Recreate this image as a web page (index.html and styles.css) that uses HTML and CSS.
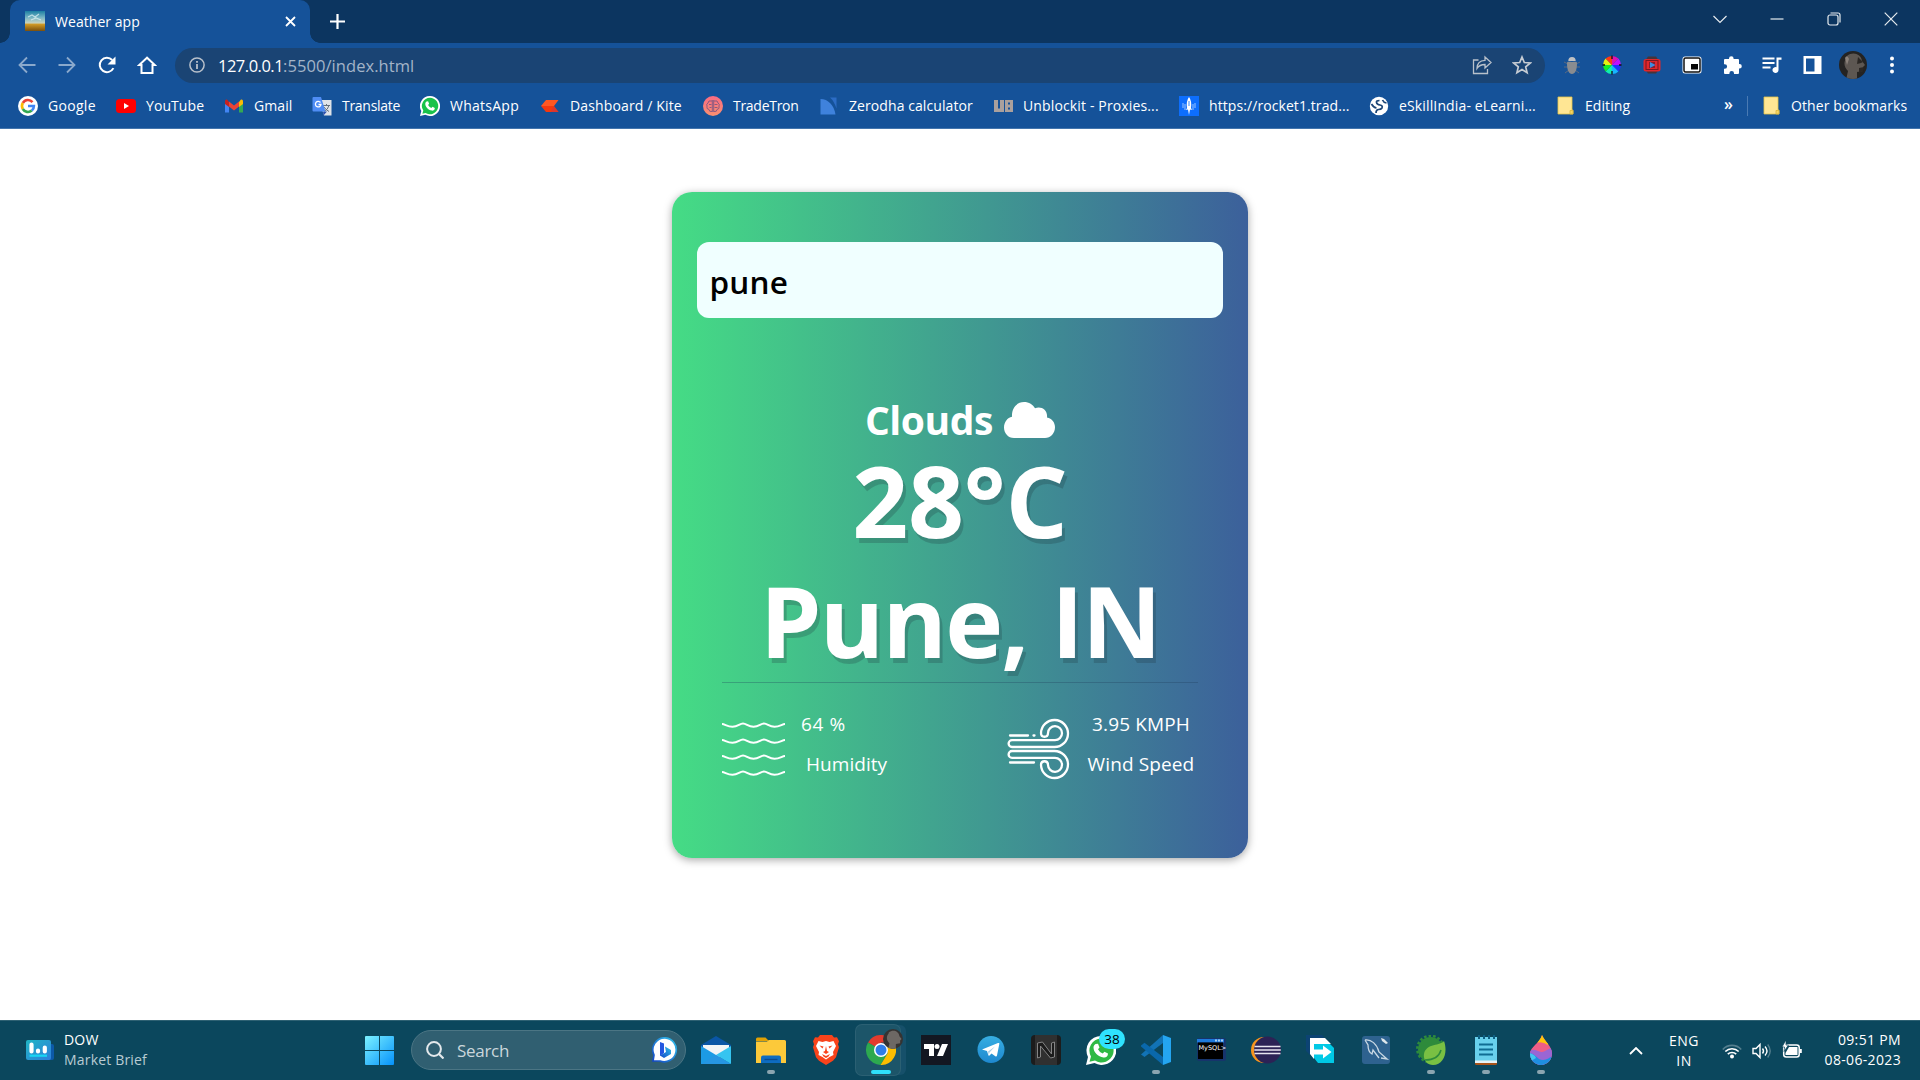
FILE: index.html
```
<!DOCTYPE html>
<html lang="en">
<head>
<meta charset="utf-8">
<title>Weather app</title>
<link rel="stylesheet" href="styles.css">
</head>
<body>
<div class="screen">
  <header class="browser">
    <div class="tabstrip">
      <div class="tab">
        <svg class="i20" viewBox="0 0 20 20"><defs><linearGradient id="fav" x1="0" y1="0" x2="0" y2="1"><stop offset="0" stop-color="#1b7fa3"/><stop offset=".35" stop-color="#7fb9c6"/><stop offset=".6" stop-color="#c7d2bd"/><stop offset=".66" stop-color="#d09a26"/><stop offset="1" stop-color="#7a4f0c"/></linearGradient></defs><rect width="20" height="20" fill="url(#fav)"/><path d="M3 6l4-2 3 2 4-3M6 9l5-2 5 2" stroke="#d7edf0" stroke-width="1.2" fill="none" opacity=".8"/></svg>
        <span class="tab-title">Weather app</span>
        <svg class="tab-close" viewBox="0 0 11 11"><path d="M1 1l9 9M10 1l-9 9" stroke="#fff" stroke-width="1.8"/></svg>
      </div>
      <svg class="new-tab" viewBox="0 0 15 15"><path d="M7.500 0v15M0 7.500h15" stroke="#fff" stroke-width="2.200"/></svg>
      <div class="window-controls">
        <svg viewBox="0 0 14 14"><path d="M.5 4l6.500 6.500L13.500 4"/></svg>
        <svg viewBox="0 0 14 14"><path d="M.5 7h13"/></svg>
        <svg viewBox="0 0 14 14"><rect x="1" y="3" width="10" height="10" rx="2"/><path d="M3.500 1H11a2 2 0 0 1 2 2v7.500"/></svg>
        <svg viewBox="0 0 14 14"><path d="M.7.7l12.600 12.600M13.300.7L.7 13.300"/></svg>
      </div>
    </div>

    <div class="toolbar">
      <div class="nav">
        <svg class="dim" viewBox="0 0 20 20"><path d="M18.500 10H3M10 2.500L2.500 10l7.500 7.500" fill="none" stroke="#fff" stroke-width="1.800"/></svg>
        <svg class="dim" viewBox="0 0 20 20"><path d="M1.500 10H17M10 2.500L17.500 10 10 17.500" fill="none" stroke="#fff" stroke-width="1.800"/></svg>
        <svg viewBox="0 0 20 20"><path d="M16.400 13.100A7.200 7.200 0 1 1 15.200 5" fill="none" stroke="#fff" stroke-width="2"/><path d="M18.500 1.500v8h-8z" fill="#fff"/></svg>
        <svg viewBox="0 0 20 20"><path d="M10 2.700L2.200 10h2.300v8h11v-8h2.300z" fill="none" stroke="#fff" stroke-width="2"/></svg>
      </div>
      <div class="omnibox">
        <svg class="info" viewBox="0 0 16 16"><circle cx="8" cy="8" r="7.100" fill="none" stroke="#b9c1cb" stroke-width="1.500"/><path d="M8 7v5M8 4v1.700" stroke="#b9c1cb" stroke-width="1.800"/></svg>
        <span class="url"><span class="host">127.0.0.1</span>:5500/index.html</span>
        <svg class="i20 share" viewBox="0 0 20 20"><path d="M6.500 5H1.500v13.500h14V14M5 13.500c0-5 3-8 8-8.200V2l6 5.500-6 5.500V9.500c-4 0-6.500 1.500-8 4z" fill="none" stroke="#b9c1cb" stroke-width="1.300"/></svg>
        <svg class="i20" viewBox="0 0 20 20"><path d="M10 2l2.300 5.500 6 .5-4.600 3.900 1.400 5.800L10 14.600l-5.100 3.100 1.400-5.800L1.700 8l6-.5z" fill="none" stroke="#c6ccd3" stroke-width="1.700"/></svg>
      </div>
      <div class="extensions">
        <svg viewBox="0 0 20 20"><path d="M2 7l4 2M18 7l-4 2M2 12h4m8 0h4M3 18l4-3m10 3l-4-3" stroke="#5c6b80"/><path d="M6.300 6a3.700 4 0 0 1 7.400 0z" fill="#bfc1c3"/><path d="M5 8.500C5 6 7 7 10 7s5-1 5 1.500C15 15 13 19 10 19S5 15 5 8.500z" fill="#898c90"/></svg>
        <svg viewBox="0 0 20 20"><path d="M10 10V1a9 9 0 0 1 6.400 2.600z" fill="#e010b0"/><path d="M10 10l6.400-6.400A9 9 0 0 1 19 10z" fill="#c010ff"/><path d="M10 10h9a9 9 0 0 1-2.600 6.400z" fill="#2130ff"/><path d="M10 10l6.400 6.400A9 9 0 0 1 10 19z" fill="#16b5ff"/><path d="M10 10v9a9 9 0 0 1-6.400-2.600z" fill="#10eeb0"/><path d="M10 10l-6.400 6.400A9 9 0 0 1 1 10z" fill="#18ee24"/><path d="M10 10H1a9 9 0 0 1 2.600-6.400z" fill="#e8ef10"/><path d="M10 10L3.600 3.600A9 9 0 0 1 10 1z" fill="#ff3912"/><path d="M10 .5v3.500M10 16v3.500M.5 10h2.500M17 10h2.500" stroke="#111" stroke-width="1.300"/></svg>
        <svg viewBox="0 0 20 20"><path d="M6 1.500h8l2 3H4zM6 18.500h8l2-3H4z" fill="#47343a"/><rect x="1.500" y="4" width="17" height="12.500" rx="2.500" fill="#e0272c"/><rect x="4" y="5.500" width="12" height="9" fill="none" stroke="#7b1720"/><rect x="7" y="7" width="6" height="6" fill="#8b1c2c"/><path d="M8 7l5.500 3-5.500 3z" fill="#3f8de0"/></svg>
        <svg viewBox="0 0 20 20"><rect x=".5" y="1.500" width="19" height="17" rx="2.500" fill="#fff"/><rect x="2" y="3" width="16" height="14" rx="1.500" fill="#fff" stroke="#111" stroke-width="1.500"/><rect x="9" y="9" width="7" height="5.500" fill="#050505"/></svg>
        <svg viewBox="0 0 20 20"><path d="M7 3.500a2.300 2.300 0 0 1 4.600 0V4H16a1 1 0 0 1 1 1v4h.5a2.300 2.300 0 0 1 0 4.600H17V18a1 1 0 0 1-1 1h-4v-.8a2.300 2.300 0 0 0-4.600 0v.8H3a1 1 0 0 1-1-1v-4.200h.8a2.300 2.300 0 0 0 0-4.600H2V5a1 1 0 0 1 1-1h4z" fill="#fff"/></svg>
        <svg viewBox="0 0 20 20"><path d="M.5 3.500h12M.5 8h12M.5 12.500h8" stroke="#fff" stroke-width="2"/><path d="M14.500 2.500h5v2.200h-3V15a3 3 0 1 1-2-2.800z" fill="#fff"/></svg>
        <svg viewBox="0 0 20 20"><path d="M1.500 1h18v18h-18zM4 3.500v13h8.500v-13z" fill="#fff" fill-rule="evenodd"/></svg>
      </div>
      <svg class="profile" viewBox="0 0 28 28"><defs><clipPath id="pc"><circle cx="14" cy="14" r="14"/></clipPath></defs><g clip-path="url(#pc)"><rect width="28" height="28" fill="#242322"/><path d="M8 5c6-5 14-2 15 5l3 4-2 2v4l-6 1v8H7l2-9c-4-4-5-9-1-14z" fill="#5d5752"/><path d="M19 6l5 5-2 1-4 1zM20 17l5-1-1 4-4 2z" fill="#2b2724"/><path d="M6 7q2-4 4 1l-2 6z" fill="#8a817a"/></g></svg>
      <svg class="menu" viewBox="0 0 6 18"><circle cx="3" cy="2.500" r="2"/><circle cx="3" cy="9" r="2"/><circle cx="3" cy="15.500" r="2"/></svg>
    </div>

    <nav class="bookmarks">
      <a class="bm"><svg class="i20" viewBox="0 0 20 20"><circle cx="10" cy="10" r="10" fill="#fff"/><g fill="none" stroke-width="2.600"><path d="M14.500 6.100A6 6 0 0 0 4.800 7" stroke="#ea4335"/><path d="M4.800 7a6 6 0 0 0 0 6" stroke="#fbbc05"/><path d="M4.800 13a6 6 0 0 0 9 1.600" stroke="#34a853"/><path d="M13.800 14.600A6 6 0 0 0 15.900 10H10" stroke="#4285f4"/></g></svg><span class="w48">Google</span></a>
      <a class="bm"><svg class="i20" viewBox="0 0 20 20"><rect y="3" width="20" height="14" rx="3.500" fill="#f00"/><path d="M8 7l5 3-5 3z" fill="#fff"/></svg><span class="w58">YouTube</span></a>
      <a class="bm"><svg class="i20" viewBox="0 0 20 20"><path d="M1 5v11.500h4V9z" fill="#4285f4"/><path d="M19 5v11.500h-4V9z" fill="#34a853"/><path d="M1 5.500V8l4 3V6L3.500 4C2 3 1 4 1 5.500z" fill="#c5221f"/><path d="M5 5.500l5 4 5-4v5l-5 4-5-4z" fill="#ea4335"/><path d="M19 5.500V8l-4 3V6l1.500-2C18 3 19 4 19 5.500z" fill="#fbbc04"/></svg><span class="w38">Gmail</span></a>
      <a class="bm"><svg class="i20" viewBox="0 0 20 20"><path d="M7 4h12.500v15.500H12z" fill="#dfe3e8"/><path d="M11 9.500h7M14.500 8v1.500M17 9.500q-1 4-5 6M12 11q2 3 5 4.500" stroke="#66727e" fill="none"/><path d="M11 15.500h4L11.500 19.500z" fill="#2a50ae"/><path d="M1.500 1H9l4.500 14.500h-12A1 1 0 0 1 .500 14.500V2a1 1 0 0 1 1-1z" fill="#4f8df5"/><path d="M8.500 6.500A2.800 2.800 0 1 0 9 8.500H6.500" fill="none" stroke="#fff" stroke-width="1.300"/></svg><span class="w58 t-tight">Translate</span></a>
      <a class="bm"><svg class="i20" viewBox="0 0 20 20"><path d="M10 0a10 10 0 1 1-4.700 18.800L0 20l1.300-5A10 10 0 0 1 10 0z" fill="#fff"/><path d="M10 1.800a8.200 8.200 0 1 1-4.400 15.100l-3.200.8.900-3.100A8.200 8.200 0 0 1 10 1.800z" fill="#19c24a"/><path d="M6.500 5.500l1.600-.2 1 2.500-1 1.200q1 2 3.200 3l1.200-1.200 2.300 1.200c0 2-1.500 2.800-3 2.600C8 14 5.300 10.500 5.300 8c0-1 .5-2 1.200-2.500z" fill="#fff"/></svg><span class="w70 t-wide">WhatsApp</span></a>
      <a class="bm"><svg class="i20" viewBox="0 0 20 20"><path d="M6 4h12.500l-4.500 6H1z" fill="#ff5722"/><path d="M1 10h13l4.500 6H6z" fill="#f4380f"/><path d="M13.500 10.500l5 5.500H11z" fill="#db362f"/></svg><span class="w113 t-mid">Dashboard / Kite</span></a>
      <a class="bm"><svg class="i20" viewBox="0 0 20 20"><defs><linearGradient id="tt" x1="0" y1="0" x2="0" y2="1"><stop stop-color="#fa6b83"/><stop offset="1" stop-color="#f99070"/></linearGradient></defs><circle cx="10" cy="10" r="10" fill="url(#tt)"/><path d="M9.300 4v12M10.700 4v12M9 5Q5 4 5 7q-2 1-1 3-1 3 2 3.500Q6 16 9 15.500M11 5q4-1 4 2 2 1 1 3 1 3-2 3.500 0 2.500-3 2M6 8.500h2.500m3 0h3m-8 3h2m3 0h3" fill="none" stroke="#8a5a80"/></svg><span class="w66 t-tight">TradeTron</span></a>
      <a class="bm"><svg class="i20" viewBox="0 0 20 20"><path d="M11 1.500h6.500v11Q15 5 11 1.500z" fill="#2c6cc5"/><path d="M1.500 3C9 3 15 9 16.500 18.500h-15z" fill="#3f82dc"/></svg><span class="w124">Zerodha calculator</span></a>
      <a class="bm"><svg class="i20" viewBox="0 0 20 20"><path d="M1 4h4v8.500h2V4h4v12H1zM12 4h8v12h-8zM15 6.500v2h2v-2zM15 11.500v2h2v-2z" fill="#aaa09d" fill-rule="evenodd"/></svg><span class="w136 t-mid">Unblockit - Proxies...</span></a>
      <a class="bm"><svg class="i20" viewBox="0 0 20 20"><rect width="20" height="20" fill="#0d6efd"/><path d="M10 1q3 4 2 11l1 2-2-.5L10 19l-1-5.500L7 14l1-2Q7 5 10 1z" fill="#fff"/><path d="M10 5v5" stroke="#3988f8"/><path d="M4 7v5M6 8v6M14 8v6M16 7v5" stroke="#9cc5ff"/></svg><span class="w140">https://rocket1.trad...</span></a>
      <a class="bm"><svg class="i20" viewBox="0 0 20 20"><circle cx="10" cy="10" r="9.200" fill="#fff"/><path d="M10.500 4.500q-3.500 0-3 2t3.500 2.500 2 3q-1 1.500-3.500 1.500T7 17M2.500 8q2 3.500 5 4M13.500 4q1 2.500 4 3" fill="none" stroke="#1b4475" stroke-width="1.700"/></svg><span class="w136 t-mid">eSkillIndia- eLearni...</span></a>
      <a class="bm"><svg class="i20 folder" viewBox="0 0 20 20"><path d="M3 1h14v13h1v4H3z" fill="#ffe694" stroke="#e5c44a" stroke-width=".8"/><path d="M15 18v-3.500h3V18z" fill="#f6d565" stroke="#dcb63a" stroke-width=".8"/></svg><span class="w46">Editing</span></a>
      <span class="more">»</span>
      <a class="bm other"><svg class="i20 folder" viewBox="0 0 20 20"><path d="M3 1h14v13h1v4H3z" fill="#ffe694" stroke="#e5c44a" stroke-width=".8"/><path d="M15 18v-3.500h3V18z" fill="#f6d565" stroke="#dcb63a" stroke-width=".8"/></svg><span class="w116">Other bookmarks</span></a>
    </nav>
  </header>

  <main class="page">
    <section class="card">
      <div class="city-input">pune</div>
      <div class="condition"><span>Clouds</span>
        <svg viewBox="0 0 51 36"><path d="M10 36C4 36 0 31 0 25.500 0 20 3.500 15.500 8 14.700 7.500 6 13 0 20 0c5 0 9 2.500 11 6.300C37 3.500 44 8 43 15.500c5 1 8 5 8 9.800C51 31.500 46.500 36 41 36z" fill="#fff"/></svg>
      </div>
      <div class="temp">28°C</div>
      <div class="place">Pune, IN</div>
      <div class="details">
        <div class="detail">
          <svg viewBox="0 0 63 62"><g fill="none" stroke="#fff" stroke-width="2"><path id="wv" d="M0 6c3 0 5 2.800 10.500 2.800S17.500 5.500 21 5.500s5 3.300 10.500 3.300S38.500 5.500 42 5.500s5 3.300 10.500 3.300S60 6 63 6"/><use href="#wv" y="16"/><use href="#wv" y="32"/><use href="#wv" y="48"/></g></svg>
          <div class="humidity"><span class="pct">64 %</span><span class="hlabel">Humidity</span></div>
        </div>
        <div class="detail">
          <svg viewBox="0 0 63 62"><g fill="none" stroke="#fff" stroke-width="2.300" stroke-linecap="round"><path d="M3 17.500h18M26.500 17.500h1M3 44.500h24"/><path d="M5 29h42.500a13.500 13.500 0 1 0-13.500-14c0 5 7 5 7 0a7 7 0 1 1 7 7.200H5a3.400 3.400 0 0 0 0 6.800z"/><path d="M5 33h42.500a13.500 13.500 0 1 1-13.500 14c0-5 7-5 7 0a7 7 0 1 0 7-7.200H5a3.400 3.400 0 0 1 0-6.800z"/></g></svg>
          <div class="wind"><span>3.95 KMPH</span><span>Wind Speed</span></div>
        </div>
      </div>
    </section>
  </main>

  <footer class="taskbar">
    <div class="widget">
      <svg viewBox="0 0 28 20"><defs><linearGradient id="wg" x1="0" y1="0" x2="1" y2="1"><stop stop-color="#20b5c4"/><stop offset="1" stop-color="#2d7fdc"/></linearGradient></defs><rect x="18" y="4" width="10" height="16" rx="2" fill="#0c59a8"/><rect width="25" height="20" rx="2" fill="url(#wg)"/><path d="M5.500 4.500v7M12 10.500v1M18.800 7.500v4" stroke="#fff" stroke-width="4.200" stroke-linecap="round"/><path d="M3.500 15.700H21" stroke="#18d6f4" stroke-width="2.200"/></svg>
      <div class="stack"><span class="bright">DOW</span><span>Market Brief</span></div>
    </div>
    <svg class="start" viewBox="0 0 29 29"><defs><linearGradient id="win" x1="0" y1="0" x2="1" y2="1"><stop stop-color="#7cf1ff"/><stop offset="1" stop-color="#0592fb"/></linearGradient></defs><path d="M1 0h13v14H0V1a1 1 0 0 1 1-1zM15 0h13a1 1 0 0 1 1 1v13H15zM0 15h14v14H1a1 1 0 0 1-1-1zM15 15h14v13a1 1 0 0 1-1 1H15z" fill="url(#win)"/></svg>
    <div class="search">
      <svg class="glass" viewBox="0 0 18 18"><circle cx="8" cy="8" r="6.900" fill="none" stroke="#e4e9ec" stroke-width="2"/><path d="M13 13l4.500 4.500" stroke="#e4e9ec" stroke-width="2.200"/></svg>
      <span>Search</span>
      <svg class="bing" viewBox="0 0 26 26"><defs><linearGradient id="bg" x1="1" y1="0" x2="0" y2="1"><stop stop-color="#31c2ea"/><stop offset="1" stop-color="#1246c6"/></linearGradient></defs><path d="M13 .8A12 12 0 1 1 8 24H1l1-6A12 12 0 0 1 13 .8z" fill="#fff" stroke="url(#bg)" stroke-width="1.700"/><path d="M8 5l4 1.500v9.500l-4 3z" fill="#2457e0"/><path d="M13 9.500l6 3.500v4l-7 4-4-2.500 6-3.500z" fill="url(#bg)"/></svg>
    </div>
    <div class="apps">
      <div class="app"><svg viewBox="0 0 30 30"><path d="M0 10L15 1l15 9v3H0z" fill="#0a56a6"/><path d="M2 10h26v8L15 24 2 17z" fill="#f1f4f6"/><path d="M0 11l30 18H0z" fill="#1c9be5"/><path d="M30 11v18L15 20z" fill="#35c4f0"/><path d="M0 29l15-9 15 9z" fill="#2696e2"/></svg></div>
      <div class="app running"><svg viewBox="0 0 30 30"><path d="M0 4a1.500 1.500 0 0 1 1.500-1.500h8L13 6H0z" fill="#e0a104"/><path d="M0 6.500h11L13 5h15.500A1.500 1.500 0 0 1 30 6.500V28H0z" fill="#fcc93a"/><path d="M5 28v-5.500a2 2 0 0 1 2-2h16a2 2 0 0 1 2 2V28z" fill="#0e6cc0"/><path d="M8.500 24.500h13" stroke="#0a4a8e" stroke-width="1.300"/></svg></div>
      <div class="app"><svg viewBox="0 0 30 30"><path d="M9 0h12l2 2.500 3-.3 2 4-1 3 1 3-3 10-3 3.500-7 4.300-7-4.300-3-3.500-3-10 1-3-1-3 2-4 3 .3z" fill="#f9431b"/><path d="M7.500 6l4 1 3.500-1 3.500 1 4-1 2.500 5-3 6 .5 3-4 2-3.500 2.500L11.500 22l-4-2 .5-3-3-6z" fill="#fff"/><path d="M8.500 10.500l4 1-1 2zM21.500 10.500l-4 1 1 2zM15 11l1 5 2 1-3 2-3-2 2-1zM11 19l4 2 4-2-1.500 2.500L15 23l-2.500-1.500z" fill="#f9431b"/></svg></div>
      <div class="app active"><svg viewBox="0 0 30 30"><path d="M15 15L2 7.500A15 15 0 0 1 28 7.500H15z" fill="#e33b2e"/><path d="M15 15L2 7.500A15 15 0 0 0 14.500 30L21.500 18z" fill="#2da94f"/><path d="M28 7.500A15 15 0 0 1 14.500 30l7-11.500L21 8z" fill="#fdbd00"/><circle cx="15" cy="15" r="7" fill="#fff"/><circle cx="15" cy="15" r="5.500" fill="#2f7de9"/></svg><svg class="mini" viewBox="0 0 28 28"><g clip-path="url(#pc)"><rect width="28" height="28" fill="#353332"/><path d="M8 5c6-5 14-2 15 5l3 4-2 2v4l-6 1v8H7l2-9c-4-4-5-9-1-14z" fill="#6d6864"/></g></svg></div>
      <div class="app"><svg viewBox="0 0 30 30"><path d="M0 0h30v30H0z" fill="#131722"/><path d="M3 9h10v12H8v-7H3zM21 9h6l-5 12h-6z" fill="#fff"/><circle cx="16" cy="11.500" r="2.500" fill="#fff"/></svg></div>
      <div class="app"><svg viewBox="0 0 30 30"><defs><linearGradient id="tg" x1="0" y1="0" x2="0" y2="1"><stop stop-color="#37aee2"/><stop offset="1" stop-color="#1e88cf"/></linearGradient></defs><circle cx="15" cy="14.500" r="13.500" fill="url(#tg)"/><path d="M6 14.500l16-6.500c1-.3 1.500 0 1.300 1L21 20.500c-.2 1-.9 1.200-1.700.7L15.500 18.500l-2 2c-.8.6-1 .2-1.200-.5L11 16z" fill="#fff"/><path d="M12 16.500l7-5-5.500 6-.7 2.500z" fill="#a9cfe8"/></svg></div>
      <div class="app"><svg viewBox="0 0 30 30"><rect width="30" height="30" rx="4" fill="#1c1c1c"/><path d="M4 0h22v30H4z" fill="#303030"/><path d="M6.500 23V8l5-1 9 12V8l3-1v15l-4 1-10-12v11z" fill="#1c1c1c" stroke="#858585"/></svg></div>
      <div class="app"><svg viewBox="0 0 30 30"><path d="M15 1a14.500 14.500 0 1 1-6.500 27L0 30l2-8A14.500 14.500 0 0 1 15 1z" fill="#fff"/><path d="M15 3.500a12 12 0 1 1-6 22l-5.500 1.300L5 21.500A12 12 0 0 1 15 3.500z" fill="#30b944"/><path d="M9.500 9l2.500-.3 1.500 3.700-1.500 1.800q1.500 3 4.700 4.400l1.800-1.800 3.500 1.800c0 3-2 4.200-4.500 3.900C12 22 7.500 17 7.500 12.500c0-1.500.8-2.800 2-3.500z" fill="#fff"/></svg><span class="badge">38</span></div>
      <div class="app running"><svg viewBox="0 0 30 30"><path d="M0 19.500L22 0v8L3.500 22z" fill="#1273b5"/><path d="M0 10.500l3.500-2.700L22 22v8L0 11.500z" fill="#0a68ab"/><path d="M22 0l8 3v24l-8 3z" fill="#24a5f1"/></svg></div>
      <div class="app"><svg viewBox="0 0 30 30"><rect x="1" y="3" width="29" height="23" rx="2" fill="#16346b"/><path d="M1 4h27v3.500H1z" fill="#1d79dc"/><path d="M19 5.500h8" stroke="#a9d0f3" stroke-width="2" stroke-dasharray="2 1"/><path d="M2 7.500h25v16.500H2z" fill="#000"/><text class="mysql" x="2.500" y="14.500">MySQL&gt;</text></svg></div>
      <div class="app"><svg viewBox="0 0 30 30"><circle cx="13" cy="15" r="13" fill="#f7941e"/><circle cx="16.500" cy="15" r="13.500" fill="#2c2255"/><path d="M3.500 11.500h26M3.300 15h26.500M3.500 18.500h26" stroke="#e7e4ef" stroke-width="1.700"/></svg></div>
      <div class="app"><svg viewBox="0 0 30 30"><path d="M0 0h16l4 4H4v16l-4-4z" fill="#0c4373"/><path d="M4 3h15l6 6H8v15l-4-5z" fill="#fff"/><path d="M8 9h16l4 4v15H12l-4-5z" fill="#00c9e6"/><path d="M8 14.500h9V10.500l8.500 6.500-8.500 6.500V19.500H8z" fill="#fff"/></svg></div>
      <div class="app"><svg viewBox="0 0 30 30"><rect x="1" y="1" width="28" height="28" rx="3" fill="#2e628f"/><path d="M4 5c6-1 12 4 14 12l8 7-6-1M4 5l3 5c0 5 2 8 4 9l1-4 6 8" fill="none" stroke="#c9d8e4" stroke-width="1.300"/><path d="M20 3l3 1 4 4-2 1-4-3z" fill="#dfe7ec"/></svg></div>
      <div class="app running"><svg viewBox="0 0 30 30"><circle cx="14.500" cy="14" r="13.200" fill="none" stroke="#2e8b3b" stroke-width="2.500" stroke-dasharray="2.600 2"/><circle cx="14.500" cy="14.500" r="12.500" fill="#2e8b3b"/><path d="M28 6c-3 5-18 2-20 13-1 6 3 11 9 11 11 0 15-13 11-24z" fill="#79c043"/><path d="M9 25c8 0 14-3 16-10" fill="none" stroke="#2e8b3b" stroke-width="1.500"/></svg></div>
      <div class="app running"><svg viewBox="0 0 30 30"><path d="M4 24h22v4.500a1.500 1.500 0 0 1-1.500 1.500h-19A1.500 1.500 0 0 1 4 28.500z" fill="#a8541b"/><path d="M4 2h22v25H4z" fill="#68d0ec"/><path d="M4 25.500h22V28H4z" fill="#e5f3f7"/><path d="M8 0v4M13 0v4M18 0v4M23 0v4" stroke="#0e5f83" stroke-width="2"/><path d="M8 9.500h14M8 14.500h14M8 19.500h14" stroke="#0f6d93" stroke-width="2"/></svg></div>
      <div class="app running"><svg viewBox="0 0 30 30"><defs><clipPath id="dp"><path d="M16 0c3 7 10 11 10 18.500C26 25 21 30 15 30S4 25 4 18.500C4 12 14 8 16 0z"/></clipPath></defs><g clip-path="url(#dp)"><path d="M0 0h30v30H0z" fill="#ef5e86"/><path d="M10 0h12v10q-6-4-12-2z" fill="#ffc60b"/><path d="M2 17c8-6 10 3 17-1 4-2 5-4 8-2v17H2z" fill="#9a66d4"/><path d="M2 18c8 0 9 7 15 7 5 0 8-4 10-3v9H2z" fill="#1e8fe1"/><path d="M2 18c4 0 7 2 8 5l-5 3z" fill="#42c7ef"/></g></svg></div>
    </div>
    <div class="tray">
      <svg class="chev" viewBox="0 0 14 8"><path d="M1 7l6-6 6 6" fill="none" stroke="#fff" stroke-width="1.800"/></svg>
      <div class="stack lang"><span>ENG</span><span>IN</span></div>
      <svg class="i20" viewBox="0 0 20 20"><g fill="none" stroke="#fff" stroke-width="1.700"><path d="M.8 8.500a12.500 12.500 0 0 1 18.400 0" opacity=".3"/><path d="M3.300 10.500a9.500 9.500 0 0 1 13.400 0M5.800 13.200a6 6 0 0 1 8.400 0"/></g><circle cx="10" cy="15.500" r="2" fill="#fff"/></svg>
      <svg class="i20" viewBox="0 0 20 20"><g fill="none" stroke="#fff" stroke-width="1.400"><path d="M1 7.500h3l4-4v13l-4-4H1z"/><path d="M10.500 7.500q2 2.500 0 5M13 5.500q4 4.500 0 9"/><path d="M15.700 3.500q5 6.500 0 13" opacity=".3"/></g></svg>
      <svg class="i20" viewBox="0 0 20 20"><rect x="1.700" y="4" width="15.500" height="12" rx="2.500" fill="none" stroke="#fff" stroke-width="1.500"/><path d="M7 6h8.500v8H3.500v-2z" fill="#fff"/><path d="M18 8h1.800v4H18z" fill="#fff"/><path d="M4-1L0 6h2.500L2 10.500 6.500 4H4z" fill="#fff" stroke="#0b465d" stroke-width=".7"/></svg>
      <div class="stack clock"><span>09:51 PM</span><span class="date">08-06-2023</span></div>
    </div>
  </footer>
</div>
</body>
</html>
```
FILE: styles.css
```
* { box-sizing: border-box; }
body { margin: 0; font-family: "Open Sans", "Noto Sans", sans-serif; background: #fff; }
svg { display: block; flex: none; }
.screen { width: 1920px; height: 1080px; display: flex; flex-direction: column; overflow: hidden; }
.i20 { width: 20px; height: 20px; }

/* browser chrome */
.browser { height: 129px; flex: none; background: #155299; border-bottom: 1px solid #4375ad; color: #fff; font-size: 14px; }
.tabstrip { height: 43px; background: #0c3560; display: flex; align-items: center; padding-left: 10px; }
.tab { position: relative; width: 300px; height: 43px; background: #155299; border-radius: 10px 10px 0 0; display: flex; align-items: center; padding: 0 14px 1px 15px; }
.tab::before, .tab::after { content: ""; position: absolute; bottom: 0; width: 10px; height: 10px; }
.tab::before { left: -10px; background: radial-gradient(circle at 0 0, #0c3560 9.5px, #155299 10px); }
.tab::after { right: -10px; background: radial-gradient(circle at 100% 0, #0c3560 9.5px, #155299 10px); }
.tab-title { margin-left: 10px; flex: 1; letter-spacing: .05px; }
.tab-close { width: 11px; height: 11px; }
.new-tab { width: 15px; height: 15px; margin: 0 0 1px 20px; }
.window-controls { margin: 0 22px 6px auto; display: flex; gap: 43px; }
.window-controls svg { width: 14px; height: 14px; fill: none; stroke: #e7ebef; stroke-width: 1.2; }

.toolbar { height: 41px; display: flex; align-items: center; padding: 4px 0 0 17px; }
.nav { display: flex; gap: 20px; width: 158px; padding-bottom: 2px; }
.nav svg { width: 20px; height: 20px; }
.nav .dim { opacity: .5; }
.omnibox { width: 1370px; height: 35px; margin-bottom: 1px; border-radius: 18px; background: #1a4474; display: flex; align-items: center; padding: 0 13px 0 14px; }
.info { width: 16px; height: 16px; }
.url { flex: 1; margin-left: 13px; font-size: 16.5px; letter-spacing: .06px; color: #a3b4c8; }
.host { color: #fff; letter-spacing: -.5px; }
.share { margin-right: 20px; }
.extensions { display: flex; gap: 20px; margin: 0 17px 1px; }
.extensions svg { width: 20px; height: 20px; }
.profile { width: 28px; height: 28px; margin-bottom: 1px; }
.menu { width: 6px; height: 18px; margin: 0 0 1px 22px; fill: #fff; }

.bookmarks { height: 44px; display: flex; align-items: center; padding: 0 13px 0 18px; }
.bm { display: flex; align-items: center; gap: 10px; margin-right: 20px; white-space: nowrap; letter-spacing: .08px; }
.bm span { padding-bottom: 1px; }
.w38 { width: 38px; }
.w46 { width: 46px; }
.w48 { width: 48px; letter-spacing: .3px; }
.w58 { width: 58px; }
.w66 { width: 66px; }
.w70 { width: 70px; }
.w113 { width: 113px; }
.w116 { width: 116px; }
.w124 { width: 124px; }
.w136 { width: 136px; }
.w140 { width: 140px; }
.t-tight { letter-spacing: -.28px; }
.t-wide { letter-spacing: .26px; }
.t-mid { letter-spacing: .14px; }
.more { margin-left: auto; width: 23px; font-size: 16px; font-weight: 600; padding-bottom: 4px; }
.other { margin: 0; padding-left: 13px; height: 20px; border-left: 1px solid #4a7ab3; }

/* weather page */
.page { flex: 1; padding-top: 63px; }
.card { width: 576px; height: 666px; margin: 0 auto; padding: 50px 25px 0; border-radius: 20px; background: linear-gradient(to right, #45dc85, #3c609b); box-shadow: 0 2px 8px rgba(0, 0, 0, .35); color: #fff; text-align: center; }
.city-input { height: 76px; padding: 3px 0 0 12.5px; border-radius: 12px; background: #f0ffff; color: #000; font-size: 31.5px; font-weight: 600; line-height: 74px; letter-spacing: .2px; text-align: left; }
.condition { height: 40px; margin-top: 82px; display: flex; align-items: center; justify-content: center; gap: 11px; font-size: 39px; font-weight: 700; line-height: 40px; letter-spacing: -.4px; }
.condition svg { width: 51px; height: 36px; }
.temp, .place { font-size: 98px; font-weight: 700; line-height: 120px; text-shadow: 3px 5px 0 rgba(30, 50, 60, .24); }
.temp { letter-spacing: -.2px; }
.place { letter-spacing: -1.7px; white-space: nowrap; }
.details { margin: 2px 25px 0; padding-top: 20px; border-top: 1px solid rgba(30, 60, 90, .3); display: flex; justify-content: space-between; font-size: 19px; line-height: 40px; }
.detail { display: flex; align-items: flex-start; }
.detail svg { width: 63px; height: 62px; margin-top: 15px; }
.humidity, .wind { display: flex; flex-direction: column; text-align: left; padding-top: 1px; }
.pct { margin-left: 16px; letter-spacing: .6px; }
.hlabel { margin-left: 21px; letter-spacing: .05px; }
.wind { margin-left: 14px; width: 114px; text-align: center; letter-spacing: .12px; }

/* taskbar */
.taskbar { height: 60px; background: #0b475d; border-top: 1px solid #2e6173; display: flex; align-items: center; color: #fff; }
.widget { width: 365px; padding-left: 26px; display: flex; align-items: center; gap: 10px; }
.widget > svg { width: 28px; height: 20px; margin-bottom: 1px; }
.stack { display: flex; flex-direction: column; font-size: 14px; line-height: 20px; padding-bottom: 1px; }
.widget .stack { color: #b8cbd3; letter-spacing: .18px; }
.widget .bright { color: #fff; }
.start { width: 29px; height: 29px; }
.search { width: 275px; height: 40px; margin: 0 2px 1px 17px; border-radius: 20px; background: #305f71; border: 1px solid #4b7584; display: flex; align-items: center; padding: 0 7px 0 14px; font-size: 17px; color: #cbd7dc; }
.glass { width: 18px; height: 18px; }
.search span { margin-left: 13px; flex: 1; letter-spacing: -.3px; }
.bing { width: 26px; height: 26px; }
.apps { display: flex; padding-bottom: 1px; }
.app { position: relative; width: 55px; height: 50px; display: flex; align-items: center; justify-content: center; }
.app > svg { width: 30px; height: 30px; }
.running::after, .active::after { content: ""; position: absolute; left: 24px; top: 45px; width: 8px; height: 4px; border-radius: 2px; background: #8ba5b0; }
.active::after { left: 18px; width: 20px; background: #2fe0fb; }
.active::before { content: ""; position: absolute; left: 3px; top: 0; width: 44px; height: 50px; border-radius: 6px; background: #1c5569; box-shadow: 0 0 0 1px #2b6073, 6px 0 0 #16506a; }
.app.active > svg { position: relative; }
.app.active > .mini { position: absolute; left: 30px; top: 4px; width: 20px; height: 20px; }
.badge { position: absolute; left: 26px; top: 4px; width: 26px; height: 20px; border-radius: 10px; background: #2fe3ff; color: #000; font-size: 13.5px; line-height: 20px; text-align: center; }
.mysql { font: 6.5px "DejaVu Sans", sans-serif; fill: #fff; }
.tray { flex: 1; display: flex; align-items: center; justify-content: flex-end; padding-right: 19px; gap: 10px; }
.chev { width: 14px; height: 8px; }
.lang { margin: 2px 13px 0 16px; width: 30px; align-items: center; letter-spacing: .45px; }
.clock { align-items: flex-end; margin-left: 10px; letter-spacing: .34px; width: 79px; }
```
